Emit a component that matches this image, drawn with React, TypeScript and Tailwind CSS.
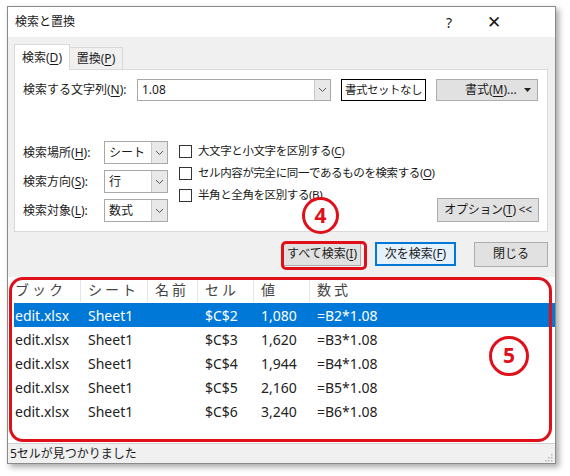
const cols = [
  { label: "ブック", w: "w-[73px]" },
  { label: "シート", w: "w-[67px]" },
  { label: "名前", w: "w-[50px]" },
  { label: "セル", w: "w-[56px]" },
  { label: "値", w: "w-[56px]" },
  { label: "数式", w: "flex-1" },
];

const rows = [
  ["edit.xlsx", "Sheet1", "", "$C$2", "1,080", "=B2*1.08"],
  ["edit.xlsx", "Sheet1", "", "$C$3", "1,620", "=B3*1.08"],
  ["edit.xlsx", "Sheet1", "", "$C$4", "1,944", "=B4*1.08"],
  ["edit.xlsx", "Sheet1", "", "$C$5", "2,160", "=B5*1.08"],
  ["edit.xlsx", "Sheet1", "", "$C$6", "3,240", "=B6*1.08"],
];

const Chevron = () => (
  <svg width="9" height="6" viewBox="0 0 9 6" fill="none">
    <path d="M1 1l3.5 3.5L8 1" stroke="#555" strokeWidth="1" />
  </svg>
);

const Select = ({ value }: { value: string }) => (
  <div className="flex h-[23px] w-[64px] border border-[#a8a8a8] bg-white">
    <div className="flex flex-1 items-center pl-[4px] text-[12px]">{value}</div>
    <div className="flex w-[16px] items-center justify-center border-l border-[#c8c8c8] bg-[#e8e8e8]">
      <Chevron />
    </div>
  </div>
);

const Check = ({ children }: { children: React.ReactNode }) => (
  <div className="flex h-[22px] items-center gap-[6px] whitespace-nowrap text-[11.5px] tracking-[-0.4px]">
    <div className="h-[13px] w-[13px] shrink-0 border border-[#333] bg-white" />
    <span>{children}</span>
  </div>
);

const U = ({ c }: { c: string }) => <span className="underline underline-offset-2">{c}</span>;

export default function App() {
  const colWidths = cols.map((c) => c.w);
  return (
    <div className="relative h-[476px] w-[570px] bg-white pl-[7px] pt-[6px] font-['Noto_Sans','Noto_Sans_CJK_JP',sans-serif] text-[#1a1a1a]">
      <div className="flex h-[458px] w-[549px] flex-col border border-[#8a8a8a] bg-[#f0f0f0] shadow-[3px_3px_6px_rgba(0,0,0,0.35)]">
        {/* title bar */}
        <div className="flex h-[30px] items-center bg-white pl-[7px] text-[12px]">
          <span className="flex-1">検索と置換</span>
          <span className="w-[41px] text-[14px]">?</span>
          <span className="w-[68px] text-[17px] font-light">✕</span>
        </div>

        <div className="flex flex-col pl-[6px] pr-[7px] pt-[7px]">
          {/* tabs */}
          <div className="flex items-end">
            <div className="relative z-10 -mb-px flex h-[26px] w-[56px] items-center justify-center border border-b-0 border-[#d9d9d9] bg-white text-[12px]">
              検索(<U c="D" />)
            </div>
            <div className="flex h-[22px] w-[53px] items-center justify-center border border-b-0 border-l-0 border-[#d9d9d9] bg-[#f0f0f0] text-[12px]">
              置換(<U c="P" />)
            </div>
          </div>

          {/* panel */}
          <div className="flex h-[163px] flex-col border border-[#d9d9d9] bg-white pb-[9px] pl-[8px] pr-[8px] pt-[9px]">
            <div className="flex h-[22px] items-center whitespace-nowrap text-[12px]">
              <span className="w-[114px]">
                検索する文字列(<U c="N" />):
              </span>
              <div className="flex h-[22px] w-[194px] border border-[#a8a8a8]">
                <div className="flex flex-1 items-center pl-[4px]">1.08</div>
                <div className="flex w-[16px] items-center justify-center border-l border-[#c8c8c8] bg-[#e8e8e8]">
                  <Chevron />
                </div>
              </div>
              <div className="ml-[10px] flex h-[22px] w-[85px] items-center justify-center border border-black bg-white text-[11.5px] tracking-[-0.5px]">
                書式セットなし
              </div>
              <div className="ml-[10px] flex h-[22px] w-[102px] items-center border border-[#adadad] bg-[#e1e1e1] pl-[28px] pr-[6px]">
                <span className="flex-1">
                  書式(<U c="M" />)...
                </span>
                <svg width="7" height="4" viewBox="0 0 7 4">
                  <path d="M0 0h7L3.5 4z" fill="#222" />
                </svg>
              </div>
            </div>

            <div className="mt-auto flex items-end">
              <div className="flex w-[146px] flex-col gap-[6px] whitespace-nowrap text-[12px]">
                {[
                  ["検索場所", "H", "シート"],
                  ["検索方向", "S", "行"],
                  ["検索対象", "L", "数式"],
                ].map(([l, k, v]) => (
                  <div key={k} className="flex items-center">
                    <span className="w-[81px]">
                      {l}(<U c={k} />):
                    </span>
                    <Select value={v} />
                  </div>
                ))}
              </div>
              <div className="mb-[16px] ml-[10px] flex flex-1 flex-col">
                <Check>
                  大文字と小文字を区別する(<U c="C" />)
                </Check>
                <Check>
                  セル内容が完全に同一であるものを検索する(<U c="O" />)
                </Check>
                <Check>
                  半角と全角を区別する(<U c="B" />)
                </Check>
              </div>
              <div className="flex h-[24px] w-[102px] items-center justify-center whitespace-nowrap border border-[#adadad] bg-[#e1e1e1] text-[12px] tracking-[-0.3px]">
                オプション(<U c="T" />)&nbsp;&lt;&lt;
              </div>
            </div>
          </div>

          {/* buttons */}
          <div className="flex h-[44px] items-center justify-end gap-[14px] whitespace-nowrap">
            <div className="flex h-[23px] w-[78px] items-center justify-center border border-[#adadad] bg-[#e1e1e1] text-[12px]">
              すべて検索(<U c="I" />)
            </div>
            <div className="flex h-[24px] w-[81px] items-center justify-center border-2 border-[#0078d7] bg-[#e5f1fb] text-[12px]">
              次を検索(<U c="F" />)
            </div>
            <div className="ml-[4px] flex h-[25px] w-[74px] items-center justify-center border border-[#adadad] bg-[#e1e1e1] text-[12px]">
              閉じる
            </div>
          </div>
        </div>

        {/* results list */}
        <div className="mt-[1px] flex flex-1 flex-col bg-white">
          <div className="flex h-[25px] items-center text-[14px] tracking-[3px] text-[#444]">
            {cols.map((c, i) => (
              <div key={c.label} className={`${c.w} flex h-full items-center pl-[7px] ${i < cols.length - 1 ? "border-r border-[#e5e5e5]" : ""}`}>
                {c.label}
              </div>
            ))}
          </div>
          <div className="mt-[1px] flex flex-col text-[14px]">
            {rows.map((r, ri) => (
              <div
                key={ri}
                className={`flex h-[24px] items-center ${ri === 0 ? "ml-[6px] bg-[#0078d7] text-white" : "text-[#222]"}`}
              >
                {r.map((cell, ci) => (
                  <div
                    key={ci}
                    className={`${colWidths[ci]} ${ri === 0 && ci === 0 ? "!w-[67px] pl-[1px]" : "pl-[7px]"}`}
                  >
                    {cell}
                  </div>
                ))}
              </div>
            ))}
          </div>
        </div>

        {/* status bar */}
        <div className="flex h-[20px] items-center border-t border-[#d0d0d0] bg-[#f0f0f0] pl-[2px] text-[12px]">
          <span className="flex-1">5セルが見つかりました</span>
          <svg width="10" height="10" viewBox="0 0 10 10" className="mr-[2px] mt-[6px]">
            {[
              [8, 2],
              [8, 5],
              [5, 5],
              [8, 8],
              [5, 8],
              [2, 8],
            ].map(([x, y], i) => (
              <rect key={i} x={x} y={y} width="1.5" height="1.5" fill="#b5b5b5" />
            ))}
          </svg>
        </div>
      </div>

      {/* annotations */}
      <div className="pointer-events-none absolute left-[281px] top-[241px] h-[29px] w-[86px] rounded-[5px] border-[3px] border-[#e0101a]" />
      <div className="pointer-events-none absolute left-[302px] top-[197px] flex h-[37px] w-[37px] items-center justify-center rounded-full border-[3px] border-[#e0101a] bg-white text-[21px] font-bold text-[#e0101a]">
        4
      </div>
      <div className="pointer-events-none absolute left-[9px] top-[277px] h-[165px] w-[543px] rounded-[14px] border-[3px] border-[#e0101a]" />
      <div className="pointer-events-none absolute left-[489px] top-[336px] flex h-[40px] w-[40px] items-center justify-center rounded-full border-[3px] border-[#e0101a] bg-white text-[21px] font-bold text-[#e0101a]">
        5
      </div>
    </div>
  );
}
